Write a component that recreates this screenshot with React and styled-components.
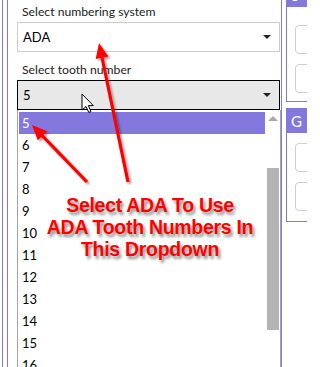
import React from 'react'
import styled, { createGlobalStyle } from 'styled-components'

const PURPLE = '#8378de'

const GlobalStyle = createGlobalStyle`
  html, body {
    margin: 0;
    padding: 0;
    background: #ffffff;
    overflow: hidden;
  }
`

const Page = styled.div`
  position: relative;
  width: 307px;
  height: 367px;
  overflow: hidden;
  display: flex;
  font-family: Lato, "Open Sans", sans-serif;
  font-size: 12px;
  color: #1a1a1a;
`

const LeftPane = styled.div`
  box-sizing: border-box;
  width: 288px;
  margin-left: 2px;
  padding-left: 4px;
  border-left: 1px solid ${PURPLE};
  border-right: 1px solid ${PURPLE};
  display: flex;
`

const Group = styled.div`
  flex: 1;
  border-left: 1px solid ${PURPLE};
  padding-left: 9px;
  display: flex;
  flex-direction: column;
`

const Label = styled.div`
  flex-shrink: 0;
  height: 16px;
  line-height: 16px;
  margin-top: ${p => p.$top}px;
  padding-left: 5px;
  font-size: 12.2px;
  color: #222;
`

const Combo = styled.div`
  flex-shrink: 0;
  box-sizing: border-box;
  width: 263px;
  height: 30px;
  margin-top: 2px;
  padding: 0 8px 0 5px;
  display: flex;
  align-items: center;
  justify-content: space-between;
  border: 1px solid ${p => (p.$focused ? '#000000' : '#cccccc')};
  background: ${p => (p.$focused ? '#e8e8e8' : '#ffffff')};
  color: #000;
  font-size: 13px;
`

const Caret = styled.span`
  width: 0;
  height: 0;
  border-left: 4px solid transparent;
  border-right: 4px solid transparent;
  border-top: 4px solid #222;
`

const List = styled.div`
  box-sizing: border-box;
  width: 264px;
  flex: 1;
  padding: 2px 1px 0 1px;
  border-left: 1px solid #a5a5a5;
  border-right: 1px solid #a8a69c;
  display: flex;
  gap: 1px;
`

const Items = styled.div`
  width: 246px;
  display: flex;
  flex-direction: column;
`

const Item = styled.div`
  flex-shrink: 0;
  height: 22px;
  line-height: 22px;
  padding-left: 3px;
  font-size: 13px;
  background: ${p => (p.$selected ? PURPLE : 'transparent')};
  color: ${p => (p.$selected ? '#ffffff' : '#000000')};
`

const Scrollbar = styled.div`
  width: 13px;
  display: flex;
  flex-direction: column;
  align-items: center;
`

const UpArrow = styled.span`
  margin-top: 4px;
  width: 0;
  height: 0;
  border-left: 5px solid transparent;
  border-right: 5px solid transparent;
  border-bottom: 5px solid #a9a9a9;
`

const Thumb = styled.div`
  flex-shrink: 0;
  width: 12px;
  height: 162px;
  margin-top: 47px;
  background: #b4b4b4;
`

const RightPane = styled.div`
  flex: 1;
  margin-left: 4px;
  display: flex;
  flex-direction: column;
  gap: 6px;
`

const Panel = styled.div`
  box-sizing: border-box;
  margin-top: ${p => p.$top || 0}px;
  border: 1px solid ${PURPLE};
  border-top: none;
  width: 40px;
`

const PanelHeader = styled.div`
  box-sizing: border-box;
  height: ${p => p.$h}px;
  padding: 0 0 3px 4px;
  background: ${PURPLE};
  color: #ffffff;
  font-size: 15px;
  display: flex;
  align-items: flex-end;
`

const PanelBody = styled.div`
  padding: ${p => p.$pad};
  display: flex;
  flex-direction: column;
  gap: 10px;
`

const Field = styled.div`
  height: 27px;
  border: 1px solid #cfcfcf;
  border-radius: 4px;
  background: #fff;
`

const Overlay = styled.svg`
  position: absolute;
  left: 0;
  top: 0;
  pointer-events: none;
`

const Callout = styled.div`
  position: absolute;
  left: 0;
  top: 194px;
  width: 300px;
  text-align: center;
  font-family: "Liberation Sans", Arial, sans-serif;
  font-weight: bold;
  font-size: 19.5px;
  line-height: 22px;
  letter-spacing: -0.3px;
  color: #ff0000;
  text-shadow: 2px 3px 3px rgba(0, 0, 0, 0.45);
  pointer-events: none;
`

const arrowPoints = (x1, y1, x2, y2, len = 15, half = 6.5, w = 1.6) => {
  const dx = x2 - x1
  const dy = y2 - y1
  const d = Math.hypot(dx, dy)
  const ux = dx / d
  const uy = dy / d
  const nx = -uy
  const ny = ux
  const bx = x2 - ux * len
  const by = y2 - uy * len
  const pts = [
    [x1 + nx * w, y1 + ny * w],
    [bx + nx * w, by + ny * w],
    [bx + nx * half, by + ny * half],
    [x2, y2],
    [bx - nx * half, by - ny * half],
    [bx - nx * w, by - ny * w],
    [x1 - nx * w, y1 - ny * w]
  ]
  return pts.map(p => p.map(v => v.toFixed(1)).join(',')).join(' ')
}

const numbers = Array.from({ length: 12 }, (_, i) => i + 5)

const App = () => {
  return (
    <Page>
      <GlobalStyle />
      <LeftPane>
        <Group>
          <Label $top={4}>Select numbering system</Label>
          <Combo>
            <span>ADA</span>
            <Caret />
          </Combo>
          <Label $top={10}>Select tooth number</Label>
          <Combo $focused>
            <span>5</span>
            <Caret />
          </Combo>
          <List>
            <Items>
              {numbers.map(n => (
                <Item key={n} $selected={n === 5}>{n}</Item>
              ))}
            </Items>
            <Scrollbar>
              <UpArrow />
              <Thumb />
            </Scrollbar>
          </List>
        </Group>
      </LeftPane>
      <RightPane>
        <Panel $top={-20}>
          <PanelHeader $h={27}>S</PanelHeader>
          <PanelBody $pad='18px 0 8px 8px'>
            <Field />
            <Field />
          </PanelBody>
        </Panel>
        <Panel>
          <PanelHeader $h={25}>G</PanelHeader>
          <PanelBody $pad='10px 0 10px 8px'>
            <Field />
            <Field />
          </PanelBody>
        </Panel>
      </RightPane>

      <Callout>
        Select ADA To Use<br />
        ADA Tooth Numbers In<br />
        This Dropdown
      </Callout>

      <Overlay width='307' height='367' viewBox='0 0 307 367'>
        <defs>
          <filter id='arrowShadow' x='-20%' y='-20%' width='140%' height='140%'>
            <feDropShadow dx='2' dy='2' stdDeviation='1.2' floodColor='#000' floodOpacity='0.35' />
          </filter>
        </defs>
        <g fill='#ff0000' filter='url(#arrowShadow)'>
          <polygon points={arrowPoints(128, 182, 99, 43)} />
          <polygon points={arrowPoints(87, 182, 32, 125)} />
        </g>
        <path
          d='M82 94 L82 110 L86 106.5 L88.8 112.5 L91 111.5 L88.3 105.6 L93.3 105.6 Z'
          fill='#ffffff'
          stroke='#000000'
          strokeWidth='1'
          strokeLinejoin='round'
        />
      </Overlay>
    </Page>
  )
}

export default App
